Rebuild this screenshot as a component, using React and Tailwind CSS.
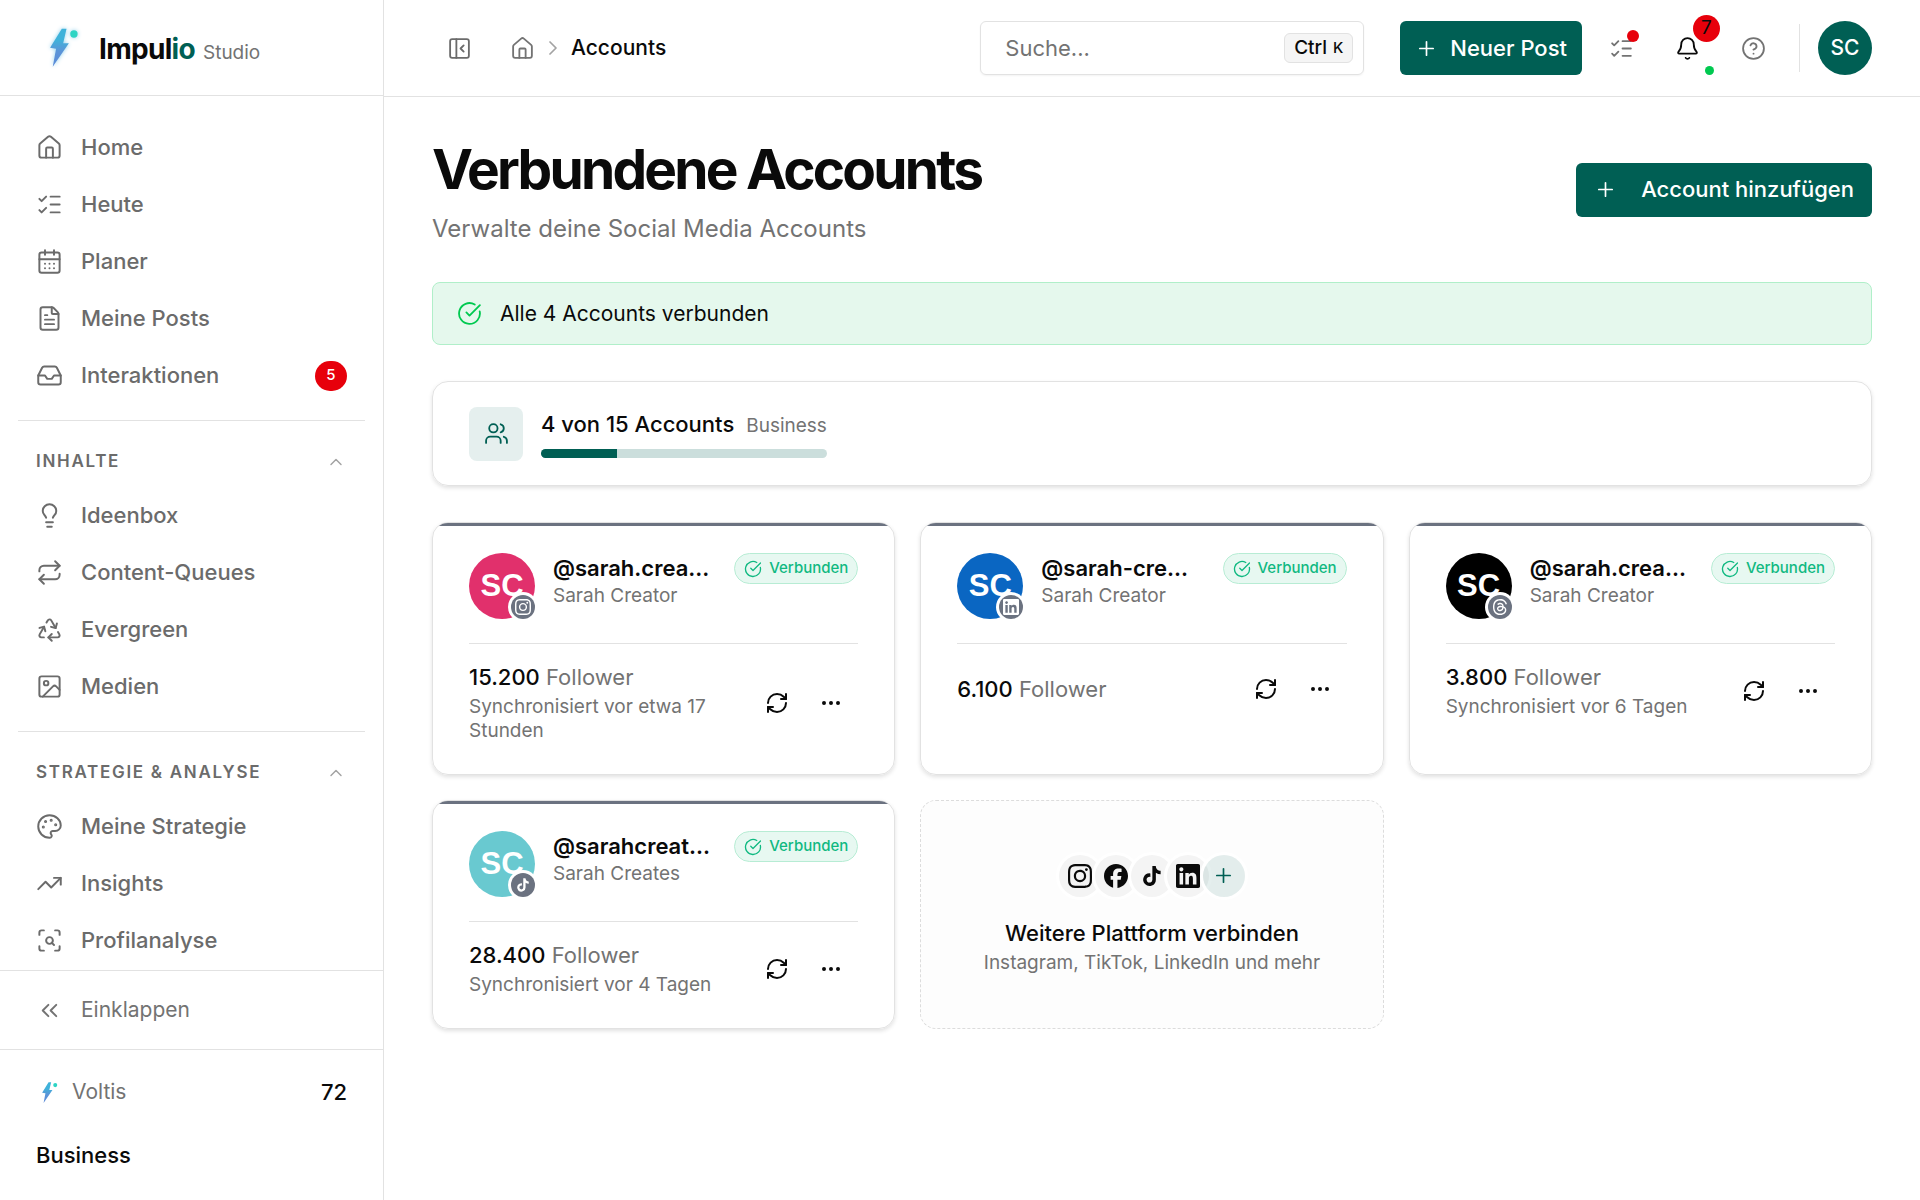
import React from 'react';
import {
  House, ListChecks, CalendarDays, FileText, Inbox, Lightbulb, Repeat, Recycle, Image, Palette,
  TrendingUp, ScanSearch, ChevronsLeft, ChevronUp, ChevronRight, PanelLeftClose, Plus, Bell,
  CircleHelp, CircleCheckBig, Users, RefreshCw, Ellipsis,
} from 'lucide-react';
import { SiInstagram, SiFacebook, SiThreads } from 'react-icons/si';

const mainNav = [
  { label: 'Home', icon: House },
  { label: 'Heute', icon: ListChecks },
  { label: 'Planer', icon: CalendarDays },
  { label: 'Meine Posts', icon: FileText },
  { label: 'Interaktionen', icon: Inbox, badge: 5 },
];
const contentNav = [
  { label: 'Ideenbox', icon: Lightbulb },
  { label: 'Content-Queues', icon: Repeat },
  { label: 'Evergreen', icon: Recycle },
  { label: 'Medien', icon: Image },
];
const strategyNav = [
  { label: 'Meine Strategie', icon: Palette },
  { label: 'Insights', icon: TrendingUp },
  { label: 'Profilanalyse', icon: ScanSearch },
];

function TikTokIcon({ className }) {
  return (
    <svg viewBox="0 0 24 24" fill="currentColor" className={className} aria-hidden="true">
      <path d="M19.59 6.69a4.83 4.83 0 0 1-3.77-4.25V2h-3.45v13.67a2.89 2.89 0 0 1-5.2 1.74 2.89 2.89 0 0 1 2.31-4.64 2.93 2.93 0 0 1 .88.13V9.4a6.84 6.84 0 0 0-1-.05A6.33 6.33 0 0 0 5 20.1a6.34 6.34 0 0 0 10.86-4.43v-7a8.16 8.16 0 0 0 4.77 1.52v-3.4a4.85 4.85 0 0 1-1-.1z" />
    </svg>
  );
}

function LinkedInIcon({ className }) {
  return (
    <svg viewBox="0 0 24 24" fill="currentColor" className={className} aria-hidden="true">
      <path d="M20.447 20.452h-3.554v-5.569c0-1.328-.027-3.037-1.852-3.037-1.853 0-2.136 1.445-2.136 2.939v5.667H9.351V9h3.414v1.561h.046c.477-.9 1.637-1.85 3.37-1.85 3.601 0 4.267 2.37 4.267 5.455v6.286zM5.337 7.433c-1.144 0-2.063-.926-2.063-2.065 0-1.138.92-2.063 2.063-2.063 1.14 0 2.064.925 2.064 2.063 0 1.139-.925 2.065-2.064 2.065zm1.782 13.019H3.555V9h3.564v11.452zM22.225 0H1.771C.792 0 0 .774 0 1.729v20.542C0 23.227.792 24 1.771 24h20.451C23.2 24 24 23.227 24 22.271V1.729C24 .774 23.2 0 22.222 0h.003z" />
    </svg>
  );
}

const accounts = [
  { handle: '@sarah.crea...', name: 'Sarah Creator', color: 'bg-[#e1306c]', icon: SiInstagram, followers: '15.200', sync: 'Synchronisiert vor etwa 17 Stunden' },
  { handle: '@sarah-cre...', name: 'Sarah Creator', color: 'bg-[#0a66c2]', icon: LinkedInIcon, followers: '6.100' },
  { handle: '@sarah.crea...', name: 'Sarah Creator', color: 'bg-black', icon: SiThreads, followers: '3.800', sync: 'Synchronisiert vor 6 Tagen' },
  { handle: '@sarahcreat...', name: 'Sarah Creates', color: 'bg-[#69c9d0]', icon: TikTokIcon, followers: '28.400', sync: 'Synchronisiert vor 4 Tagen' },
];

function Bolt({ className, id }) {
  return (
    <svg viewBox="56 50 92 122" className={className} aria-hidden="true">
      <defs>
        <linearGradient id={id} x1="0" y1="0" x2="0" y2="1">
          <stop offset="0.3" stopColor="#3fb2da" />
          <stop offset="0.6" stopColor="#5b94d8" />
          <stop offset="1" stopColor="#5b8ad8" />
        </linearGradient>
      </defs>
      <path d="M97 55 L111 55 L101 98 L118 98 L70 168 L80 115 L62 112 Z" fill={`url(#${id})`} strokeLinejoin="round" />
      <circle cx="133" cy="71" r="11" fill="#2dd4c4" />
    </svg>
  );
}

function NavList({ items }) {
  return (
    <ul>
      {items.map(({ label, icon: Icon, badge }) => (
        <li key={label}>
          <a href="#" className="flex h-[57px] items-center gap-[18px] px-[18px] text-[22px] font-medium text-[#6b6b6b]">
            <Icon size={27} strokeWidth={1.75} className="shrink-0" />
            <span className="flex-1">{label}</span>
            {badge && (
              <span className="flex h-[30px] w-8 items-center justify-center rounded-full bg-[#e7000b] text-[15px] text-white">{badge}</span>
            )}
          </a>
        </li>
      ))}
    </ul>
  );
}

function NavSection({ title, items }) {
  return (
    <section className="mt-4 border-t border-[#e2e2e2] pt-4">
      <button type="button" className="flex h-[50px] w-full items-center justify-between pr-[19px] pl-[18px]">
        <span className="text-[17px] font-semibold uppercase tracking-widest text-[#6b6b6b]">{title}</span>
        <ChevronUp size={20} strokeWidth={1.75} className="text-[#a3a3a3]" />
      </button>
      <NavList items={items} />
    </section>
  );
}

function Sidebar() {
  return (
    <aside className="flex w-96 shrink-0 flex-col border-r border-[#e2e2e2]">
      <div className="flex h-24 shrink-0 items-center gap-5 border-b border-[#e2e2e2] px-12">
        <Bolt id="bolt-large" className="h-[41px] w-[31px] drop-shadow-[0_0_2px_#8fd0ec]" />
        <div className="flex items-baseline gap-2 pt-[3px]">
          <span className="text-[28px] font-bold tracking-tight text-[#0a0a0a]">Impul<span className="text-[#005f54]">io</span></span>
          <span className="text-[19px] text-[#737373]">Studio</span>
        </div>
      </div>
      <nav className="min-h-0 flex-1 overflow-hidden px-[18px] pt-[23px]">
        <NavList items={mainNav} />
        <NavSection title="Inhalte" items={contentNav} />
        <NavSection title="Strategie & Analyse" items={strategyNav} />
      </nav>
      <div className="shrink-0 border-t border-[#e2e2e2] px-[18px] py-3">
        <button type="button" className="flex h-[54px] w-full items-center gap-[18px] px-[18px] text-[21px] text-[#737373]">
          <ChevronsLeft size={27} strokeWidth={1.75} />
          Einklappen
        </button>
      </div>
      <div className="shrink-0 border-t border-[#e2e2e2] px-9 pt-7 pb-[31px]">
        <div className="flex h-7 items-center">
          <Bolt id="bolt-small" className="mr-[14px] ml-[5px] h-[23px] w-[17px]" />
          <span className="flex-1 text-[21px] text-[#737373]">Voltis</span>
          <span className="text-[22px] font-medium">72</span>
        </div>
        <div className="mt-[35px] text-[22px] leading-7 font-medium">Business</div>
      </div>
    </aside>
  );
}

function Topbar() {
  return (
    <header className="flex h-[97px] shrink-0 items-center border-b border-[#e2e2e2] px-12">
      <button type="button" aria-label="Seitenleiste einklappen" className="flex h-[54px] w-[54px] items-center justify-center text-[#6b6b6b]">
        <PanelLeftClose size={25} strokeWidth={1.75} />
      </button>
      <nav aria-label="Brotkrumen" className="ml-6 flex items-center gap-[6px]">
        <a href="#" aria-label="Home" className="text-[#737373]"><House size={25} strokeWidth={1.75} /></a>
        <ChevronRight size={24} strokeWidth={1.75} className="text-[#a3a3a3]" />
        <span className="text-[21px] font-medium">Accounts</span>
      </nav>
      <div className="ml-auto flex items-center">
        <label className="flex h-[54px] w-96 items-center rounded-md border border-[#e2e2e2] pr-[10px] pl-6 shadow-xs">
          <input type="search" aria-label="Suche" placeholder="Suche..." className="min-w-0 flex-1 text-[22px] outline-none placeholder:text-[#737373]" />
          <kbd className="flex h-[30px] items-center gap-[6px] rounded-md border border-[#e2e2e2] bg-[#f5f5f5] px-[9px] font-[Inter] text-[19px] font-medium">
            Ctrl <span className="text-[15px]">K</span>
          </kbd>
        </label>
        <button type="button" className="ml-9 flex h-[54px] items-center gap-3 rounded-md bg-[#005f54] px-[15px] text-[22px] font-medium text-white">
          <Plus size={23} strokeWidth={1.75} />
          Neuer Post
        </button>
        <button type="button" aria-label="Aufgaben" className="relative ml-3 flex h-[54px] w-[54px] items-center justify-center text-[#737373]">
          <ListChecks size={25} strokeWidth={1.75} />
          <span className="absolute top-[9px] right-[9px] h-3 w-3 rounded-full bg-[#e7000b]" />
        </button>
        <button type="button" aria-label="Benachrichtigungen" className="relative ml-3 flex h-[54px] w-[54px] items-center justify-center">
          <Bell size={25} strokeWidth={1.75} />
          <span className="absolute -top-[6px] -right-[6px] flex h-[27px] w-[27px] items-center justify-center rounded-full bg-[#e7000b] text-[19px]">7</span>
          <span className="absolute right-0 bottom-0 h-[9px] w-[9px] rounded-full bg-[#00c950]" />
        </button>
        <button type="button" aria-label="Hilfe" className="ml-3 flex h-[54px] w-[54px] items-center justify-center text-[#737373]">
          <CircleHelp size={25} strokeWidth={1.75} />
        </button>
        <div className="mr-[18px] ml-[19px] h-12 w-px bg-[#e2e2e2]" />
        <button type="button" className="h-[54px] w-[54px] rounded-full bg-[#005f54] text-[21px] font-medium text-white">SC</button>
      </div>
    </header>
  );
}

function AccountCard({ account }) {
  const Icon = account.icon;
  return (
    <article className="relative overflow-hidden rounded-2xl border border-[#e2e2e2] px-9 pt-[30px] pb-[31px] shadow-[0_2px_4px_rgba(0,0,0,0.12)]">
      <div className="absolute inset-x-0 top-0 h-[3px] bg-[#6b7280]" />
      <div className="flex items-start gap-[18px] border-b border-[#e2e2e2] pb-6">
        <div className={`relative flex h-[66px] w-[66px] shrink-0 items-center justify-center rounded-full font-['Liberation_Sans'] text-[31px] font-bold text-white ${account.color}`}>
          SC
          <span className="absolute right-0 bottom-0 flex h-6 w-6 items-center justify-center rounded-full bg-[#6b7280] ring-3 ring-white">
            <Icon className="h-4 w-4" />
          </span>
        </div>
        <div className="min-w-0 flex-1">
          <h3 className="truncate text-[22px] leading-[30px] font-semibold">{account.handle}</h3>
          <p className="text-[19px] leading-[26px] text-[#737373]">{account.name}</p>
        </div>
        <span className="flex h-[31px] shrink-0 items-center gap-[7px] rounded-full border border-[#b7ecd4] bg-[#e7f8f1] px-[9px] text-[15px] font-medium text-[#10b981]">
          <CircleCheckBig size={18} strokeWidth={1.75} />
          Verbunden
        </span>
      </div>
      <div className="flex items-center pt-[18px]">
        <div className="flex-1">
          <p className="text-[22px] leading-[30px] text-[#737373]"><span className="font-medium text-[#0a0a0a]">{account.followers}</span> Follower</p>
          {account.sync && <p className="mt-[3px] text-[19px] leading-6 text-[#737373]">{account.sync}</p>}
        </div>
        <button type="button" aria-label="Synchronisieren" className="flex h-[54px] w-[54px] items-center justify-center"><RefreshCw size={24} strokeWidth={2} /></button>
        <button type="button" aria-label="Mehr" className="flex h-[54px] w-[54px] items-center justify-center"><Ellipsis size={24} strokeWidth={2} /></button>
      </div>
    </article>
  );
}

export default function App() {
  return (
    <div className="flex h-screen overflow-hidden bg-white font-[Inter,sans-serif] text-[#0a0a0a]">
      <Sidebar />
      <div className="flex min-w-0 flex-1 flex-col">
        <Topbar />
        <main className="min-h-0 flex-1 overflow-auto px-12 pt-9">
          <div className="flex items-center justify-between">
            <div>
              <h1 className="text-[55px] leading-[73px] font-bold tracking-tighter">Verbundene Accounts</h1>
              <p className="mt-[6px] text-2xl leading-[34px] text-[#737373]">Verwalte deine Social Media Accounts</p>
            </div>
            <button type="button" className="flex h-[54px] items-center gap-6 rounded-md bg-[#005f54] px-[18px] text-[22px] font-medium text-white">
              <Plus size={23} strokeWidth={1.75} />
              Account hinzufügen
            </button>
          </div>

          <div role="status" className="mt-9 flex h-[63px] items-center gap-[18px] rounded-lg border border-[#b0efc9] bg-[#e5f8ed] px-6 text-[21px]">
            <CircleCheckBig size={25} strokeWidth={1.75} className="text-[#00c950]" />
            Alle 4 Accounts verbunden
          </div>

          <div className="mt-9 flex h-[105px] items-center rounded-2xl border border-[#e2e2e2] px-9 shadow-[0_2px_4px_rgba(0,0,0,0.12)]">
            <div className="mr-[18px] flex h-[54px] w-[54px] items-center justify-center rounded-lg bg-[#e5efee] text-[#005f54]">
              <Users size={25} strokeWidth={1.75} />
            </div>
            <div>
              <div className="flex items-baseline gap-3 leading-[30px]">
                <span className="text-[22px] font-medium">4 von 15 Accounts</span>
                <span className="text-[19px] text-[#737373]">Business</span>
              </div>
              <div className="mt-2 h-[9px] overflow-hidden rounded-full bg-[#cbdedc]">
                <div className="h-full bg-[#005f54]" style={{ width: `${(4 / 15) * 100}%` }} />
              </div>
            </div>
          </div>

          <div className="mt-9 grid grid-cols-3 gap-[25px]">
            {accounts.map((a) => <AccountCard key={a.handle + a.followers} account={a} />)}
            <button type="button" className="flex flex-col items-center justify-center rounded-2xl border border-dashed border-[#dcdcdc] bg-[#fdfdfd]">
              <span className="flex">
                {[SiInstagram, SiFacebook, TikTokIcon, LinkedInIcon].map((Icon, i) => (
                  <span key={i} className="-mr-[6px] flex h-[42px] w-[42px] items-center justify-center rounded-full bg-[#f4f4f4] ring-3 ring-white">
                    <Icon className="h-6 w-6" />
                  </span>
                ))}
                <span className="flex h-[42px] w-[42px] items-center justify-center rounded-full bg-[#005f54]/10 text-[#005f54] ring-3 ring-white">
                  <Plus size={23} strokeWidth={1.75} />
                </span>
              </span>
              <span className="mt-[21px] text-[22px] leading-[30px] font-medium">Weitere Plattform verbinden</span>
              <span className="mt-[3px] text-[19px] leading-6 text-[#737373]">Instagram, TikTok, LinkedIn und mehr</span>
            </button>
          </div>
        </main>
      </div>
    </div>
  );
}
